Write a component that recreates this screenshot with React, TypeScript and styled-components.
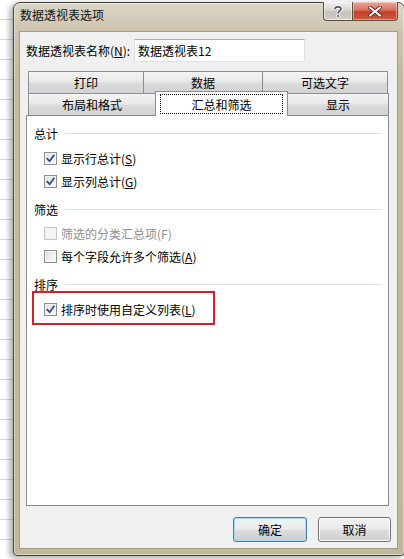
import React from 'react';
import styled, {createGlobalStyle, css} from 'styled-components';

const GlobalStyle = createGlobalStyle`
	html, body {
		margin: 0;
		padding: 0;
		overflow: hidden;
	}
	body {
		font-family: "Noto Sans CJK SC", "Microsoft YaHei", sans-serif;
		font-size: 12px;
		color: #000;
	}
`;

// spreadsheet behind the dialog
const Page = styled.div`
	width: 404px;
	height: 559px;
	overflow: hidden;
	box-sizing: border-box;
	padding: 2px 0 0 13px;
	background: #fff repeating-linear-gradient(to bottom, transparent 0 19px, #d6d6d6 19px 20px);
`;

const Window = styled.div`
	width: 392px;
	height: 554px;
	box-sizing: border-box;
	display: flex;
	flex-direction: column;
	padding: 0 7px 7px 6px;
	border: 1px solid #4a4436;
	border-radius: 7px 7px 4px 4px;
	background: linear-gradient(#dcd6c6 0px, #cbc3ad 30px, #c3b99f 80px, #c1b79d 100%);
	box-shadow: -3px 2px 6px rgba(0, 0, 0, 0.35), inset 0 0 0 1px rgba(255, 255, 255, 0.45);
`;

const TitleBar = styled.div`
	height: 29px;
	display: flex;
	align-items: flex-start;
`;

const Title = styled.div`
	margin-top: 3px;
	line-height: 18px;
	color: #111;
`;

const CaptionButtons = styled.div`
	margin-left: auto;
	margin-right: -1px;
	margin-top: -1px;
	display: flex;
`;

const CaptionButton = styled.div<{$close?: boolean}>`
	height: 19px;
	box-sizing: border-box;
	display: flex;
	align-items: center;
	justify-content: center;
	border: 1px solid #5c5140;
	border-top: none;
	${p => p.$close ? css`
		width: 46px;
		border-radius: 0 0 4px 0;
		background: linear-gradient(#e9a99b 0%, #d9705c 45%, #c2402a 55%, #d2583e 100%);
		box-shadow: inset 0 0 0 1px rgba(255, 220, 210, 0.5);
	` : css`
		width: 29px;
		border-right: none;
		border-radius: 0 0 0 4px;
		background: linear-gradient(#eeeeec 0%, #d9d7d2 45%, #c4c1ba 55%, #d3d0ca 100%);
		box-shadow: inset 0 0 0 1px rgba(255, 255, 255, 0.55);
	`}
`;

const Client = styled.div`
	flex: 1;
	display: flex;
	flex-direction: column;
	background: #f0f0f0;
	box-shadow: 0 0 0 1px #a39b86;
`;

const NameRow = styled.div`
	display: flex;
	align-items: center;
	margin: 7px 0 0 6px;
	height: 23px;
`;

const NameLabel = styled.label`
	width: 108px;
	white-space: nowrap;
`;

const NameInput = styled.div`
	width: 171px;
	height: 23px;
	box-sizing: border-box;
	padding-left: 3px;
	display: flex;
	align-items: center;
	background: #fff;
	border: 1px solid #dde2e8;
	border-top-color: #abadb3;
`;

const Tabs = styled.div`
	margin: 9px 0 0 8px;
	display: flex;
	flex-direction: column;
`;

const TabRow = styled.div`
	display: flex;
	align-items: flex-start;
	height: 22px;
`;

const Tab = styled.div<{$w: number; $active?: boolean}>`
	width: ${p => p.$w}px;
	height: 22px;
	box-sizing: border-box;
	display: flex;
	align-items: center;
	justify-content: center;
	border: 1px solid #8c8e94;
	border-bottom: none;
	background: linear-gradient(#f4f4f4, #e9e9e9 45%, #dadada 55%, #d2d2d2);
	& + & {
		margin-left: -1px;
	}
	${p => p.$active && css`
		position: relative;
		z-index: 1;
		height: 25px;
		margin-top: -2px;
		margin-bottom: -1px;
		background: #fff;
		padding: 2px 4px 2px;
		align-items: stretch;
	`}
`;

const FocusRect = styled.span`
	flex: 1;
	display: flex;
	align-items: center;
	justify-content: center;
	border: 1px dotted #000;
`;

const Panel = styled.div`
	margin-left: 6px;
	width: 363px;
	height: 391px;
	box-sizing: border-box;
	border: 1px solid #898c95;
	background: #fff;
	padding: 8px 6px 0 7px;
`;

const Section = styled.div`
	& + & {
		margin-top: 7px;
	}
`;

const SectionHeader = styled.div`
	height: 18px;
	display: flex;
	align-items: center;
`;

const Rule = styled.div`
	flex: 1;
	height: 1px;
	margin-left: 7px;
	background: #dbe0e5;
`;

const Items = styled.div<{$top: number}>`
	padding-top: ${p => p.$top}px;
`;

const CheckRow = styled.div<{$disabled?: boolean; $indent?: number}>`
	height: 23px;
	display: flex;
	align-items: center;
	gap: 4px;
	padding-left: ${p => p.$indent ?? 10}px;
	color: ${p => p.$disabled ? '#8e8e8e' : '#000'};
`;

const Box = styled.span<{$disabled?: boolean}>`
	width: 13px;
	height: 13px;
	box-sizing: border-box;
	display: inline-flex;
	align-items: center;
	justify-content: center;
	border: 1px solid ${p => p.$disabled ? '#c9c9c9' : '#8f8f8f'};
	background: ${p => p.$disabled
		? '#f4f4f4'
		: 'linear-gradient(135deg, #d9dadb 0%, #eeeeee 50%, #fbfbfb 100%)'};
	box-shadow: inset 0 0 0 1px ${p => p.$disabled ? '#f0f0f0' : '#f4f4f4'};
`;

const Highlight = styled.div`
	margin: -2px 0 0 -2px;
	width: 183px;
	box-sizing: border-box;
	border: 2px solid #d4202a;
	padding: 5px 0 2px 10px;
`;

const ButtonRow = styled.div`
	display: flex;
	justify-content: flex-end;
	gap: 11px;
	margin-top: 11px;
	padding-right: 6px;
`;

const Button = styled.button<{$w: number; $default?: boolean}>`
	width: ${p => p.$w}px;
	height: 25px;
	box-sizing: border-box;
	font: inherit;
	color: #000;
	border-radius: 3px;
	border: 1px solid ${p => p.$default ? '#3c7fb1' : '#707070'};
	background: linear-gradient(#f2f2f2 0%, #ebebeb 48%, #dddddd 52%, #cfcfcf 100%);
	box-shadow: inset 0 0 0 1px ${p => p.$default ? '#a9dcf4' : '#fbfbfb'};
	padding: 0;
`;

const Check = () => (
	<svg width="9" height="9" viewBox="0 0 9 9">
		<path d="M1.2 4.6 L3.6 7.2 L7.9 1.4" fill="none" stroke="#34508f" strokeWidth="1.8" strokeLinecap="round" strokeLinejoin="round" />
	</svg>
);

const CheckItem = ({checked, disabled, label, accel, indent}: {
	checked?: boolean; disabled?: boolean; label: string; accel: string; indent?: number;
}) => (
	<CheckRow $disabled={disabled} $indent={indent}>
		<Box $disabled={disabled}>{checked && <Check />}</Box>
		{/* disabled items show no access-key underline */}
		<span>{label}({disabled ? accel : <u>{accel}</u>})</span>
	</CheckRow>
);

export default function App() {
	return (
		<>
			<GlobalStyle />
			<Page>
				<Window>
					<TitleBar>
						<Title>数据透视表选项</Title>
						<CaptionButtons>
							<CaptionButton>
								<svg width="10" height="13" viewBox="0 0 10 13">
									<path d="M2 4 C2 1.2 8 1.2 8 4 C8 6 5 6 5 8.5" fill="none" stroke="#fff" strokeWidth="3.2" />
									<path d="M2 4 C2 1.2 8 1.2 8 4 C8 6 5 6 5 8.5" fill="none" stroke="#4b4e55" strokeWidth="1.6" />
									<rect x="3.7" y="9.8" width="2.6" height="2.4" fill="#4b4e55" stroke="#fff" strokeWidth="0.8" />
								</svg>
							</CaptionButton>
							<CaptionButton $close>
								<svg width="14" height="11" viewBox="0 0 14 11">
									<path d="M2 1.5 L12 9.5 M12 1.5 L2 9.5" stroke="#5a1a10" strokeWidth="3.6" strokeLinecap="round" />
									<path d="M2 1.5 L12 9.5 M12 1.5 L2 9.5" stroke="#fff" strokeWidth="2.2" strokeLinecap="round" />
								</svg>
							</CaptionButton>
						</CaptionButtons>
					</TitleBar>
					<Client>
						<NameRow>
							<NameLabel>数据透视表名称(<u>N</u>):</NameLabel>
							<NameInput>数据透视表12</NameInput>
						</NameRow>
						<Tabs>
							<TabRow>
								<Tab $w={116}>打印</Tab>
								<Tab $w={120}>数据</Tab>
								<Tab $w={126}>可选文字</Tab>
							</TabRow>
							<TabRow>
								<Tab $w={128}>布局和格式</Tab>
								<Tab $w={133} $active><FocusRect>汇总和筛选</FocusRect></Tab>
								<Tab $w={102}>显示</Tab>
							</TabRow>
						</Tabs>
						<Panel>
							<Section>
								<SectionHeader>总计<Rule /></SectionHeader>
								<Items $top={5}>
									<CheckItem checked label="显示行总计" accel="S" />
									<CheckItem checked label="显示列总计" accel="G" />
								</Items>
							</Section>
							<Section>
								<SectionHeader>筛选<Rule /></SectionHeader>
								<Items $top={4}>
									<CheckItem disabled label="筛选的分类汇总项" accel="F" />
									<CheckItem label="每个字段允许多个筛选" accel="A" />
								</Items>
							</Section>
							<Section>
								<SectionHeader>排序<Rule /></SectionHeader>
								<Highlight>
									<CheckItem checked indent={0} label="排序时使用自定义列表" accel="L" />
								</Highlight>
							</Section>
						</Panel>
						<ButtonRow>
							<Button $w={74} $default>确定</Button>
							<Button $w={73}>取消</Button>
						</ButtonRow>
					</Client>
				</Window>
			</Page>
		</>
	);
}
